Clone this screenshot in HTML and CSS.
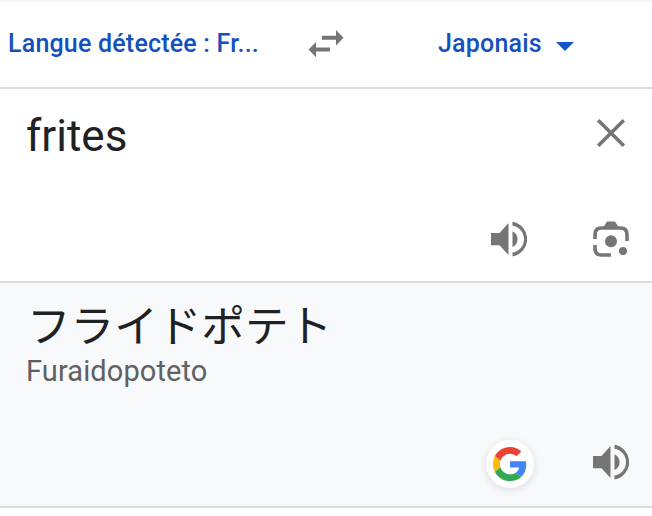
FILE: index.html
```html
<!DOCTYPE html>
<html lang="fr">
<head>
    <meta charset="utf-8">
    <title>Traduction</title>
    <link rel="stylesheet" href="styles.css">
</head>
<body>
    <div class="translator">
        <div class="languages">
            <div class="lang source-lang">Langue détectée : Fr...</div>
            <svg class="swap" viewBox="0 0 36 28">
                <path d="M14 5.700h14V0l7.500 7.700-7.500 7.800V9.700H14zM22 17.600H8V12L.5 19.600 8 27.200v-5.600h14z"/>
            </svg>
            <div class="lang target-lang">Japonais</div>
            <div class="arrow-down"></div>
        </div>

        <div class="panel source">
            <div class="source-row">
                <div class="source-text">frites</div>
                <svg class="icon" viewBox="0 0 36 36">
                    <path class="cross" d="M5.200 5.200l25.600 25.600M30.800 5.200L5.200 30.800"/>
                </svg>
            </div>
            <div class="actions">
                <svg class="icon" viewBox="0 0 36 36">
                    <path d="M0 12h8.500L17.500 2v32L8.500 24.300H0zM21.500 10.300q5 2.700 5 7.900t-5 7.900zM21.500.8A17.600 17.600 0 0 1 21.500 35.500v-4A13.500 13.500 0 0 0 21.500 4.800z"/>
                </svg>
                <svg class="icon" viewBox="0 0 36 36">
                    <path class="frame" d="M2 18v-4.500q0-6.500 6.500-6.500h19q6.500 0 6.500 6.500V20M2 24v3.500q0 6.500 6.500 6.500H18"/>
                    <path d="M10.500 6l3.500-5.500h8L25.500 6z"/>
                    <circle cx="18" cy="20.300" r="6"/>
                    <circle cx="30" cy="30" r="4"/>
                </svg>
            </div>
        </div>

        <div class="panel result">
            <div class="result-text" lang="ja">フライドポテト</div>
            <div class="romaji">Furaidopoteto</div>
            <div class="actions">
                <div class="google">
                    <svg class="google-logo" viewBox="0 0 48 48">
                        <path fill="#ea4335" d="M24 9.500c3.540 0 6.710 1.220 9.210 3.600l6.850-6.850C35.900 2.380 30.470 0 24 0 14.620 0 6.510 5.380 2.560 13.220l7.980 6.190C12.430 13.720 17.740 9.500 24 9.500z"/>
                        <path fill="#4285f4" d="M46.980 24.550c0-1.570-.15-3.090-.38-4.550H24v9.020h12.940c-.58 2.960-2.260 5.480-4.780 7.180l7.730 6c4.510-4.180 7.090-10.360 7.090-17.650z"/>
                        <path fill="#fbbc05" d="M10.530 28.590c-.48-1.450-.76-2.990-.76-4.590s.27-3.140.76-4.590l-7.980-6.190C.92 16.460 0 20.120 0 24s.92 7.540 2.560 10.780l7.970-6.190z"/>
                        <path fill="#34a853" d="M24 48c6.480 0 11.930-2.130 15.890-5.810l-7.730-6c-2.150 1.450-4.920 2.300-8.160 2.300-6.260 0-11.570-4.220-13.470-9.910l-7.980 6.190C6.510 42.620 14.620 48 24 48z"/>
                    </svg>
                </div>
                <svg class="icon" viewBox="0 0 36 36">
                    <path d="M0 12h8.500L17.500 2v32L8.500 24.300H0zM21.500 10.300q5 2.700 5 7.900t-5 7.900zM21.500.8A17.600 17.600 0 0 1 21.500 35.500v-4A13.500 13.500 0 0 0 21.500 4.800z"/>
                </svg>
            </div>
        </div>
    </div>
</body>
</html>
```

FILE: styles.css
```css
* {
    box-sizing: border-box;
}
body {
    margin: 0;
    background-color: #fff;
    font-family: Roboto, "Noto Sans CJK JP", sans-serif;
    color: #202124;
}
.translator {
    border-top: 2px solid #f5f5f5;
}
.languages {
    display: flex;
    align-items: center;
    height: 87px;
    padding: 0 8px 2px;
    border-bottom: 2px solid #dcdddf;
}
.lang {
    font-size: 25px;
    font-weight: 500;
    line-height: 32px;
    letter-spacing: 0.2px;
    color: #1550c0;
    white-space: nowrap;
}
.source-lang {
    width: 300px;
}
.swap {
    width: 36px;
    height: 28px;
    fill: #757575;
}
.target-lang {
    margin-left: 94px;
}
.arrow-down {
    margin: 6px 0 0 14px;
    border: 9px solid transparent;
    border-top-color: #1155cc;
    border-bottom: 0;
}
.panel {
    display: flex;
    flex-direction: column;
    padding: 0 23px 0 27px;
}
.source {
    height: 194px;
    padding-top: 20px;
    padding-bottom: 24px;
    border-bottom: 2px solid #dadce0;
}
.source-row {
    display: flex;
    justify-content: space-between;
}
.source-text {
    margin-left: -1px;
    font-size: 44px;
    line-height: 55px;
}
.icon {
    width: 36px;
    height: 36px;
    fill: #757575;
}
.source-row .icon {
    margin: 6px 0 0;
}
.cross,
.frame {
    fill: none;
    stroke: #757575;
    stroke-width: 3.6;
}
.actions {
    display: flex;
    justify-content: flex-end;
    align-items: center;
    gap: 66px;
    margin-top: auto;
}
.result {
    height: 225px;
    padding-top: 17px;
    padding-bottom: 18px;
    background-color: #f8f9fb;
    border-bottom: 2px solid #dadce0;
}
.result-text {
    font-size: 43.6px;
    line-height: 56px;
}
.romaji {
    margin: -2px 0 0 -1px;
    font-size: 29px;
    line-height: 34px;
    letter-spacing: 0.1px;
    color: #5f6063;
}
.result .actions {
    gap: 59px;
}
.result .icon {
    margin-bottom: 4px;
}
.google {
    display: flex;
    align-items: center;
    justify-content: center;
    width: 48px;
    height: 48px;
    border-radius: 50%;
    background-color: #fff;
    box-shadow: 0 2px 8px rgba(0, 0, 0, 0.12);
}
.google-logo {
    width: 34px;
    height: 34px;
}
```
